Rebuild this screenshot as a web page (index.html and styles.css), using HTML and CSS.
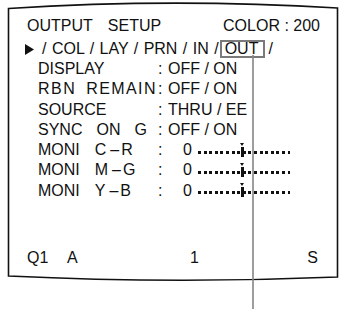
FILE: index.html
```html
<!DOCTYPE html>
<html lang="en">
<head>
  <meta charset="UTF-8" />
  <title>Output Setup</title>
  <link rel="stylesheet" href="styles.css">
</head>
<body>
  <div class="screen">
    <svg class="frame" width="340" height="309" viewBox="0 0 340 309">
      <path d="M8.5,8.5 Q172,-2 337.5,8 L337.5,277 Q172,284 8.5,276 Z" fill="none" stroke="#111" stroke-width="1.6"/>
      <line x1="253" y1="55" x2="253" y2="309" stroke="#858585" stroke-width="1.6"/>
    </svg>

    <div class="title">
      <span><span class="word">OUTPUT</span>SETUP</span>
      <span>COLOR : 200</span>
    </div>

    <div class="menu">
      <svg class="pointer" width="9" height="11" viewBox="0 0 9 11"><path d="M0,0 L9,5.5 L0,11 Z" fill="#111"/></svg>
      <span>/ COL / LAY / PRN / IN /</span><span class="sel">OUT</span><span>/</span>
    </div>

    <div class="rows">
      <div class="label">DISPLAY</div><div class="colon">:</div><div class="value">OFF / ON</div>
      <div class="label"><span class="rbn">RBN</span><span class="remain">REMAIN</span></div><div class="colon">:</div><div class="value">OFF / ON</div>
      <div class="label">SOURCE</div><div class="colon">:</div><div class="value">THRU / EE</div>
      <div class="label"><span class="sync">SYNC</span><span class="on">ON</span><span>G</span></div><div class="colon">:</div><div class="value">OFF / ON</div>
      <div class="label"><span class="moni">MONI</span><span>C</span><span class="dash">–</span><span>R</span></div><div class="colon">:</div><div class="value level"><span class="zero">0</span><span class="bar"></span></div>
      <div class="label"><span class="moni">MONI</span><span>M</span><span class="dash">–</span><span>G</span></div><div class="colon">:</div><div class="value level"><span class="zero">0</span><span class="bar"></span></div>
      <div class="label"><span class="moni">MONI</span><span>Y</span><span class="dash">–</span><span>B</span></div><div class="colon">:</div><div class="value level"><span class="zero">0</span><span class="bar"></span></div>
    </div>

    <div class="status">
      <span class="q1">Q1</span>
      <span class="mode">A</span>
      <span>1</span>
      <span class="right">S</span>
    </div>
  </div>
</body>
</html>
```

FILE: styles.css
```css
body {
  margin: 0;
  background: #ffffff;
  color: #111111;
  font-family: "Liberation Sans", Arial, sans-serif;
  font-size: 16px;
}
.screen {
  position: relative;
  width: 340px;
  height: 309px;
  padding-top: 16px;
  box-sizing: border-box;
  overflow: hidden;
}
.frame {
  position: absolute;
  left: 0;
  top: 0;
}
.title {
  display: flex;
  justify-content: space-between;
  line-height: 20px;
  padding: 0 20px 0 27px;
  margin-bottom: 3px;
}
.word {
  margin-right: 15px;
}
.menu {
  display: flex;
  align-items: center;
  line-height: 20px;
  padding-left: 25px;
  word-spacing: 1px;
}
.pointer {
  margin-right: 8px;
}
.sel {
  border: 2px solid #7a7a7a;
  padding: 0 5px 0 3px;
  line-height: 14px;
  margin: 0 3px 0 1px;
}
.rows {
  display: grid;
  grid-template-columns: 120px 10px auto;
  line-height: 20.3px;
  padding-left: 38px;
}
.rbn {
  letter-spacing: 1.5px;
  margin-right: 10px;
}
.remain {
  letter-spacing: 1.4px;
}
.sync {
  margin-right: 14px;
}
.on {
  margin-right: 14px;
}
.moni {
  margin-right: 15px;
}
.dash {
  margin: 0 2px 0 4px;
}
.level {
  display: flex;
  align-items: center;
}
.zero {
  margin-left: 15px;
  margin-right: 6px;
}
.bar {
  position: relative;
  width: 92px;
  height: 3px;
  margin-top: 4px;
  background: repeating-linear-gradient(to right, #111 0 3px, transparent 3px 5.6px);
}
.bar::before {
  content: "";
  position: absolute;
  left: 43px;
  top: -4px;
  width: 3px;
  height: 10px;
  background: #111;
}
.bar::after {
  content: "";
  position: absolute;
  left: 42px;
  top: -8px;
  border-left: 2.5px solid transparent;
  border-right: 2.5px solid transparent;
  border-top: 3px solid #111;
}
.status {
  display: flex;
  line-height: 20px;
  padding: 0 22px 0 27px;
  margin-top: 47px;
}
.q1 {
  width: 40px;
}
.mode {
  width: 123px;
}
.right {
  margin-left: auto;
}
```
